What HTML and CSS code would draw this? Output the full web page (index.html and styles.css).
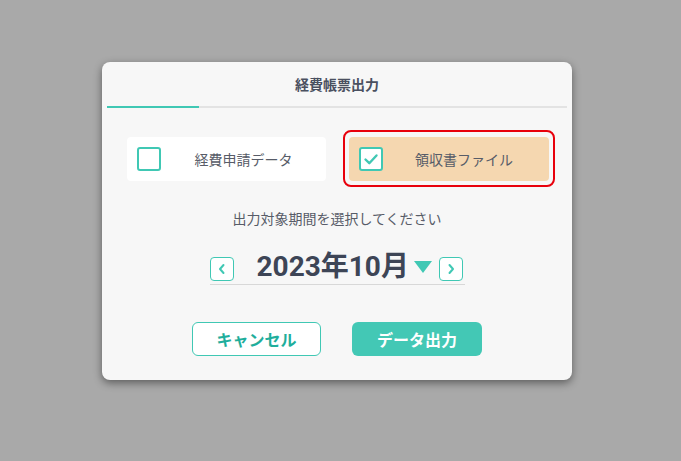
FILE: index.html
```html
<!DOCTYPE html>
<html lang="ja">
<head>
<meta charset="utf-8">
<link rel="stylesheet" href="styles.css">
</head>
<body>
<div class="dialog">
  <div class="title">経費帳票出力</div>
  <div class="tabs"><div class="tab-active"></div></div>
  <div class="options">
    <div class="card">
      <span class="cb"></span>
      <span class="label">経費申請データ</span>
    </div>
    <div class="selected-wrap">
      <div class="card card-on">
        <span class="cb">
          <svg width="20" height="20" viewBox="0 0 20 20"><path d="M4.5 10.5 L8.3 14.2 L15.5 6.5" fill="none" stroke="#40c8b4" stroke-width="2.4" stroke-linecap="round" stroke-linejoin="round"/></svg>
        </span>
        <span class="label">領収書ファイル</span>
      </div>
    </div>
  </div>
  <div class="prompt">出力対象期間を選択してください</div>
  <div class="date-row">
    <span class="nav">
      <svg width="10" height="12" viewBox="0 0 10 12"><path d="M6.5 2 L3 6 L6.5 10" fill="none" stroke="#40c8b4" stroke-width="2" stroke-linecap="round" stroke-linejoin="round"/></svg>
    </span>
    <span class="date">2023年10月</span>
    <span class="tri"></span>
    <span class="nav">
      <svg width="10" height="12" viewBox="0 0 10 12"><path d="M3.5 2 L7 6 L3.5 10" fill="none" stroke="#40c8b4" stroke-width="2" stroke-linecap="round" stroke-linejoin="round"/></svg>
    </span>
  </div>
  <div class="actions">
    <button class="btn btn-cancel">キャンセル</button>
    <button class="btn btn-primary">データ出力</button>
  </div>
</div>
</body>
</html>
```
FILE: styles.css
```css
html, body {
  margin: 0;
  padding: 0;
}
body {
  background: #a9a9a9;
  width: 681px;
  height: 461px;
  overflow: hidden;
  font-family: "Noto Sans CJK JP", "Noto Sans", sans-serif;
}
.dialog {
  margin: 62px 0 0 102px;
  width: 470px;
  height: 318px;
  box-sizing: border-box;
  background: #f7f7f7;
  border-radius: 8px;
  box-shadow: 0 3px 8px rgba(0, 0, 0, 0.45);
  display: flex;
  flex-direction: column;
  align-items: center;
}
.title {
  margin-top: 11px;
  height: 22px;
  line-height: 22px;
  font-size: 14px;
  font-weight: 700;
  color: #4a5060;
}
.tabs {
  margin-top: 11px;
  width: 460px;
  height: 2px;
  background: #e3e3e3;
  display: flex;
}
.tab-active {
  width: 92px;
  background: #40c8b4;
}
.options {
  margin-top: 22px;
  width: 100%;
  box-sizing: border-box;
  padding-left: 25px;
  display: flex;
  align-items: center;
}
.card {
  width: 199px;
  height: 44px;
  box-sizing: border-box;
  background: #ffffff;
  border-radius: 4px;
  display: flex;
  align-items: center;
  padding-left: 10px;
}
.card-on {
  width: 200px;
  background: #f5d7b0;
}
.selected-wrap {
  margin-left: 17px;
  padding: 5px 4px 4px;
  border: 2px solid #e8000c;
  border-radius: 8px;
}
.cb {
  width: 24px;
  height: 24px;
  box-sizing: border-box;
  border: 2px solid #40c8b4;
  border-radius: 3px;
  background: #ffffff;
  display: flex;
  align-items: center;
  justify-content: center;
}
.label {
  flex: 1;
  text-align: center;
  font-size: 14px;
  color: #575c68;
}
.card-on .label {
  padding-right: 4px;
}
.prompt {
  margin-top: 20px;
  height: 22px;
  line-height: 22px;
  font-size: 14px;
  color: #575c68;
}
.date-row {
  margin-top: 26px;
  width: 255px;
  display: flex;
  align-items: center;
  padding-bottom: 1px;
  border-bottom: 1px solid #d8d8d8;
}
.nav {
  width: 24px;
  height: 24px;
  box-sizing: border-box;
  border: 1px solid #40c8b4;
  border-radius: 4px;
  background: #ffffff;
  display: flex;
  align-items: center;
  justify-content: center;
}
.date {
  margin-left: 23px;
  margin-bottom: 4px;
  width: 152px;
  font-family: Roboto, "Noto Sans CJK JP", sans-serif;
  font-size: 28px;
  font-weight: 700;
  color: #3d4556;
  line-height: 24px;
  white-space: nowrap;
}
.tri {
  margin-left: 5px;
  margin-right: 7px;
  width: 0;
  height: 0;
  border-left: 9.5px solid transparent;
  border-right: 9.5px solid transparent;
  border-top: 12px solid #40c8b4;
  margin-top: -4px;
}
.actions {
  margin-top: 37px;
  display: flex;
  gap: 31px;
}
.btn {
  width: 130px;
  height: 34px;
  box-sizing: border-box;
  border-radius: 6px;
  font-family: "Noto Sans CJK JP", sans-serif;
  font-size: 16px;
  font-weight: 700;
  padding: 0;
  cursor: pointer;
}
.btn-cancel {
  width: 129px;
  background: #ffffff;
  border: 1px solid #40c8b4;
  color: #1fae9c;
}
.btn-primary {
  background: #43c8b5;
  border: none;
  color: #ffffff;
}
```
